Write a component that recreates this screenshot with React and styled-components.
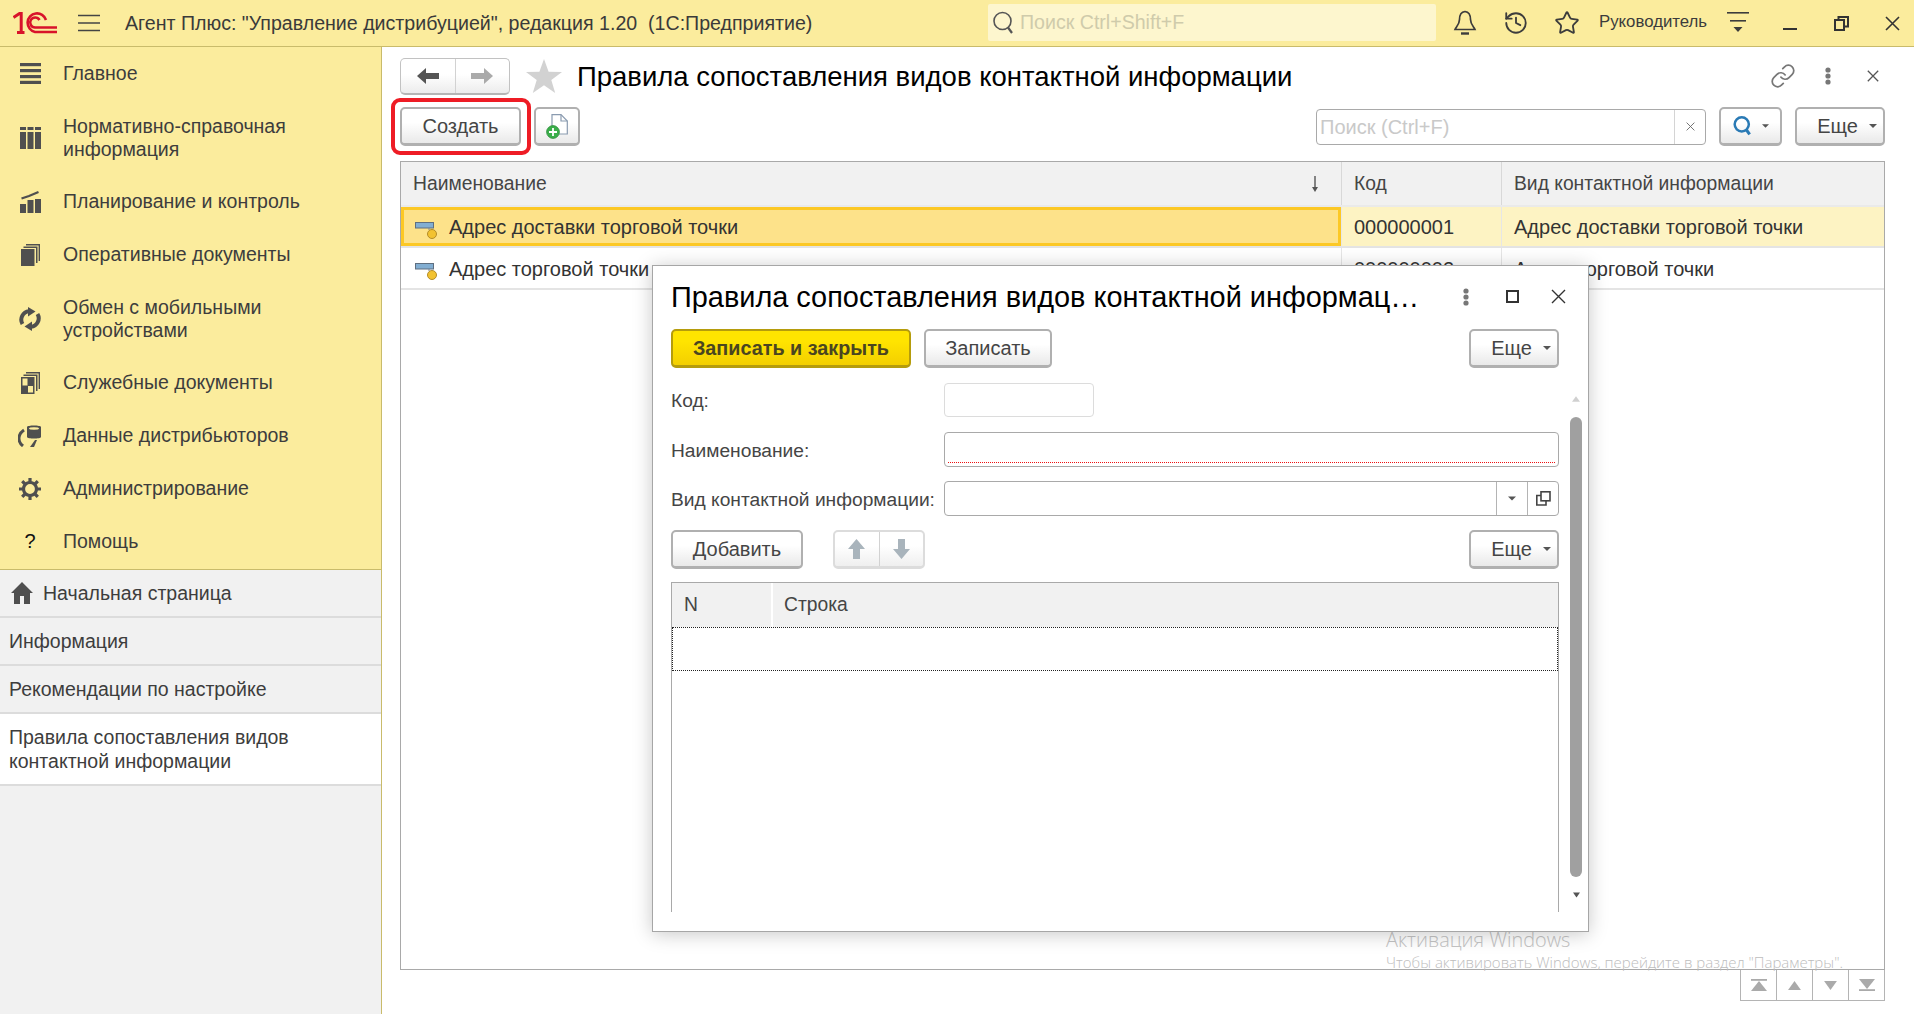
import React from "react";
import styled, { createGlobalStyle } from "styled-components";
import { History, Star, Link } from "lucide-react";

const Global = createGlobalStyle`
  html, body { margin: 0; padding: 0; width: 100%; height: 100%; overflow: hidden; background: #fff; }
  #root { height: 100%; }
  *, *::before, *::after { box-sizing: border-box; }
  body { font-family: "Liberation Sans", Arial, sans-serif; color: #3d3d3d; }
`;

const Page = styled.div`
  position: relative;
  width: 1914px;
  height: 1014px;
  display: flex;
  flex-direction: column;
  overflow: hidden;
`;

/* ---------- top bar ---------- */
const TopBar = styled.header`
  height: 47px;
  flex: none;
  display: flex;
  align-items: center;
  background: #fbec9d;
  border-bottom: 1px solid #c9bb6b;
  padding-left: 13px;
  & > * { flex: none; }
`;
const Burger = styled.span`
  display: flex;
  margin-left: 21px;
  margin-right: 25px;
`;
const AppTitle = styled.div`
  font-size: 19.6px;
  color: #3a3a3a;
  white-space: pre;
  width: 863px;
`;
const GlobalSearch = styled.div`
  width: 448px;
  height: 37px;
  margin-top: -1px;
  background: #fdf6ce;
  border-radius: 2px;
  display: flex;
  align-items: center;
  gap: 4px;
  padding-left: 4px;
  font-size: 19.6px;
  color: #cfcbab;
`;
const TopIcons = styled.div`
  display: flex;
  align-items: center;
`;
const TopIcon = styled.span`
  display: flex;
  justify-content: center;
  width: ${(p) => p.$w}px;
  padding-left: ${(p) => p.$pl || 0}px;
  color: #3c3c3c;
`;
const UserName = styled.span`
  font-size: 16.8px;
  color: #3c3c3c;
  width: 107px;
  margin: -3px 11px 0 3px;
  white-space: nowrap;
`;

/* ---------- layout ---------- */
const Body = styled.div`
  flex: 1;
  display: flex;
  min-height: 0;
`;
const Sidebar = styled.aside`
  width: 382px;
  flex: none;
  display: flex;
  flex-direction: column;
  background: #f1f1f1;
  border-right: 1px solid #c9bb6b;
`;
const MainMenu = styled.nav`
  background: #fbec9d;
  border-bottom: 1px solid #c9bb6b;
  height: 523px;
  flex: none;
`;
const MenuItem = styled.div`
  display: flex;
  align-items: center;
  padding: 14.5px 0 14.5px 17px;
  min-height: 53px;
  font-size: 19.5px;
  line-height: 23px;
  color: #3d3d3d;
`;
const MenuIcon = styled.span`
  width: 26px;
  flex: none;
  display: flex;
  justify-content: center;
  margin-right: 20px;
  font-size: 20px;
  color: #111;
`;
const SectionItem = styled.div`
  display: flex;
  align-items: center;
  gap: 10px;
  height: ${(p) => (p.$tall ? 72 : 48)}px;
  padding: ${(p) => (p.$tall ? "0 30px 0 9px" : "0 0 0 9px")};
  background: ${(p) => (p.$active ? "#fff" : "transparent")};
  border-bottom: 2px solid #dcdcdc;
  font-size: 19.5px;
  line-height: 24px;
  color: #3d3d3d;
`;
const HomeSlot = styled.span`
  display: flex;
  margin-left: 2px;
`;

const Main = styled.main`
  flex: 1;
  min-width: 0;
  display: flex;
  flex-direction: column;
  background: #fff;
  padding: 11px 29px 13px 18px;
`;
const Header = styled.div`
  height: 36px;
  flex: none;
  display: flex;
  align-items: center;
`;
const NavGroup = styled.div`
  width: 110px;
  height: 37px;
  flex: none;
  display: flex;
  border: 1px solid #c2c2c2;
  border-bottom: 2px solid #b5b5b5;
  border-radius: 5px;
  background: linear-gradient(#fff 45%, #ececec);
`;
const NavCell = styled.span`
  flex: 1;
  display: flex;
  align-items: center;
  justify-content: center;
  & + & { border-left: 1px solid #d2d2d2; }
`;
const FavStar = styled.span`
  display: flex;
  margin: 0 15px 0 16px;
`;
const PageTitle = styled.h1`
  margin: 1px 0 0;
  font-size: 27.5px;
  font-weight: 400;
  color: #000;
  flex: 1;
  white-space: nowrap;
`;
const HeaderIcons = styled.div`
  display: flex;
  align-items: center;
  color: #777;
  margin-right: 6px;
`;

const Toolbar = styled.div`
  height: 39px;
  flex: none;
  margin-top: 13px;
  display: flex;
  align-items: center;
`;
const Highlighted = styled.div`
  position: relative;
  display: flex;
  margin-right: 13px;
  &::after {
    content: "";
    position: absolute;
    left: -9px;
    top: -9px;
    width: 140px;
    height: 57px;
    border: 4px solid #ee1c25;
    border-radius: 9px;
    pointer-events: none;
  }
`;
const Btn = styled.button`
  width: ${(p) => p.$w}px;
  height: 39px;
  flex: none;
  padding: 0;
  display: flex;
  align-items: center;
  justify-content: center;
  gap: 9px;
  font: ${(p) => (p.$primary ? 700 : 400)} ${(p) => (p.$primary ? 19.8 : 20)}px "Liberation Sans", Arial, sans-serif;
  color: ${(p) => (p.$primary ? "#4a4520" : "#454545")};
  background: ${(p) =>
    p.$primary ? "linear-gradient(#ffe400 30%, #f3cf00)" : "linear-gradient(#fff 40%, #e9e9e9)"};
  border: 2px solid ${(p) => (p.$primary ? "#b59c0c" : "#b0b0b0")};
  border-bottom-width: 3px;
  border-radius: 5px;
`;
const MoreBtn = styled(Btn)`
  padding-left: 14px;
  gap: 11px;
`;
const Spacer = styled.div`
  flex: 1;
`;
const SearchField = styled.div`
  width: 390px;
  height: 36px;
  flex: none;
  display: flex;
  align-items: center;
  margin-right: 13px;
  border: 1px solid #a9a9a9;
  border-radius: 4px;
  font-size: 20px;
  color: #c9c9c9;
`;
const SearchText = styled.span`
  flex: 1;
  padding: 2px 0 0 3px;
`;
const ClearCell = styled.span`
  width: 31px;
  height: 100%;
  display: flex;
  align-items: center;
  justify-content: center;
  border-left: 1px solid #d4d4d4;
  color: #666;
`;
const Gap = styled.span`
  width: ${(p) => p.$w}px;
  height: ${(p) => p.$h || 0}px;
  flex: none;
`;

const DataTable = styled.section`
  flex: 1;
  min-height: 0;
  margin-top: 15px;
  border: 1px solid #a9a9a9;
  border-top-width: 1px;
`;
const MainRow = styled.div`
  display: grid;
  grid-template-columns: 940px 160px 1fr;
  height: ${(p) => p.$h}px;
  border-bottom: 2px solid ${(p) => p.$line || "#e4e4e4"};
  font-size: ${(p) => (p.$head ? 19.3 : 20)}px;
`;
const HeadCell = styled.div`
  display: flex;
  align-items: center;
  justify-content: space-between;
  padding: 0 21px 0 12px;
  background: #f1f1f1;
  color: #454545;
  & + & { border-left: 1px solid #d8d8d8; }
`;
const Cell = styled.div`
  display: flex;
  align-items: center;
  gap: 11px;
  padding-top: 2px;
  padding-left: ${(p) => (p.$first ? 14 : 12)}px;
  color: #333;
  background: ${(p) => (p.$sel ? "#fdf3c3" : "transparent")};
  & + & { border-left: 1px solid #e6e6e6; }
`;
const CurrentCell = styled(Cell)`
  background: #fde28a;
  border: 3px solid #fcc825;
  padding-left: 11px;
`;
const RowIconSlot = styled.span`
  display: flex;
  margin-top: 5px;
`;

const Footer = styled.div`
  height: 31px;
  flex: none;
  display: flex;
  justify-content: flex-end;
`;
const PagerCell = styled.span`
  width: 37px;
  height: 31px;
  margin-left: -1px;
  display: flex;
  align-items: center;
  justify-content: center;
  border: 1px solid #b4b4b4;
  border-top: none;
`;

/* ---------- floating window ---------- */
const Dialog = styled.div`
  position: absolute;
  left: 652px;
  top: 265px;
  width: 937px;
  height: 667px;
  display: flex;
  flex-direction: column;
  background: #fff;
  border: 1px solid #a6a6a6;
  box-shadow: 0 2px 18px rgba(0, 0, 0, 0.22);
  padding: 0 7px 19px 18px;
`;
const DialogHead = styled.div`
  height: 63px;
  flex: none;
  display: flex;
  align-items: center;
  padding-right: 4px;
`;
const DialogTitle = styled.div`
  font-size: 28.9px;
  color: #000;
  width: 792px;
  flex: none;
  white-space: nowrap;
`;
const DialogIcons = styled.div`
  display: flex;
  align-items: center;
  margin-top: -2px;
`;
const DialogToolbar = styled.div`
  height: 39px;
  flex: none;
  display: flex;
  align-items: center;
  gap: 13px;
  padding-right: 22px;
`;
const FormBody = styled.div`
  flex: 1;
  min-height: 0;
  display: flex;
  margin-top: 15px;
`;
const Fields = styled.div`
  width: 888px;
  flex: none;
  display: flex;
  flex-direction: column;
  gap: 14px;
`;
const FieldRow = styled.div`
  display: flex;
  align-items: center;
  margin-bottom: ${(p) => p.$mb || 0}px;
`;
const Label = styled.span`
  width: 273px;
  flex: none;
  margin-top: 2px;
  font-size: 19.2px;
  color: #454545;
  white-space: nowrap;
`;
const Input = styled.div`
  position: relative;
  width: ${(p) => p.$w}px;
  height: ${(p) => p.$h || 35}px;
  display: flex;
  justify-content: flex-end;
  border: 1px solid ${(p) => (p.$dim ? "#dcdcdc" : "#a9a9a9")};
  border-radius: 4px;
  background: #fff;
`;
const RequiredMark = styled.span`
  position: absolute;
  left: 3px;
  right: 3px;
  bottom: 3px;
  border-bottom: 1px dotted #ee1111;
`;
const FieldBtn = styled.span`
  width: 31px;
  display: flex;
  align-items: center;
  justify-content: center;
  border-left: 1px solid #b4b4b4;
`;
const TableToolbar = styled.div`
  height: 39px;
  flex: none;
  display: flex;
  align-items: center;
`;
const ArrowGroup = styled.div`
  width: 92px;
  height: 39px;
  margin-left: 30px;
  display: flex;
  border: 2px solid #dcdcdc;
  border-bottom-width: 3px;
  border-radius: 5px;
  background: linear-gradient(#fff 40%, #efefef);
`;
const InnerTable = styled.div`
  flex: 1;
  min-height: 0;
  margin-top: -1px;
  border: 1px solid #a9a9a9;
  border-bottom: none;
  font-size: 19.3px;
`;
const InnerHead = styled.div`
  display: grid;
  grid-template-columns: 99px 1fr;
  height: 44px;
  background: #f1f1f1;
`;
const InnerHeadCell = styled.div`
  display: flex;
  align-items: center;
  padding-left: 12px;
  color: #454545;
  & + & { border-left: 2px solid #fff; padding-left: 11px; }
`;
const InnerRow = styled.div`
  height: 44px;
  border: 1px dotted #222;
`;
const ScrollRail = styled.div`
  width: 12px;
  margin-left: 11px;
  padding-top: 13px;
  flex: none;
  display: flex;
  flex-direction: column;
  align-items: center;
`;
const ScrollThumb = styled.div`
  width: 12px;
  height: 460px;
  flex: none;
  margin: 15px 0 15px;
  border-radius: 6px;
  background: #a0a0a0;
`;

/* ---------- activation watermark ---------- */
const Watermark = styled.div`
  position: absolute;
  left: 1386px;
  top: 927px;
  color: #c4c4c4;
  font-family: "Open Sans", sans-serif;
  font-weight: 300;
  pointer-events: none;
`;
const WatermarkTitle = styled.div`
  font-size: 19.9px;
  line-height: 25px;
`;
const WatermarkText = styled.div`
  font-size: 15px;
  line-height: 20px;
  color: #bdbdbd;
  white-space: nowrap;
`;

/* ---------- icons ---------- */
const G = "#4f4f4f";

const Logo = () => (
  <svg width="44" height="22" viewBox="0 0 44 22" fill="none" stroke="#d8132a" strokeWidth="2.6">
    <path d="M0.5 5.5 L6.5 1.6 H8.2 V20.5 M4 20.5 H11.5" strokeWidth="3" />
    <path d="M44 20 H22 A9.4 9.4 0 1 1 33 8" />
    <path d="M44 15.5 H22 A5 5 0 1 1 26.5 8" />
  </svg>
);
const BurgerIcon = () => (
  <svg width="22" height="18" viewBox="0 0 22 18" stroke="#444" strokeWidth="1.6">
    <path d="M0 1.5 H22 M0 9 H22 M0 16.5 H22" />
  </svg>
);
const SearchIcon = ({ size = 24, color = "#555", w = 2 }) => (
  <svg width={size} height={size} viewBox="0 0 24 24" fill="none" stroke={color} strokeWidth={w}>
    <circle cx="10.5" cy="10" r="8.5" />
    <path d="M16 16.5 L20 22" strokeWidth={w + 0.6} />
  </svg>
);
const BellIcon = () => (
  <svg width="24" height="26" viewBox="0 0 24 26" fill="none" stroke="#3c3c3c" strokeWidth="1.7">
    <path d="M12 1.5 C8 2 6.5 5 6.5 9.5 C6.5 14.5 3 17 2 19.5 H22 C21 17 17.5 14.5 17.5 9.5 C17.5 5 16 2 12 1.5 Z" />
    <path d="M8 23.5 H16" strokeWidth="2.4" />
  </svg>
);
const FilterIcon = () => (
  <svg width="22" height="22" viewBox="0 0 22 22" fill="#3c3c3c" stroke="none">
    <rect x="0" y="0" width="22" height="1.6" />
    <rect x="3" y="8" width="16" height="1.6" />
    <path d="M6.5 15 H15.5 L11 20 Z" />
  </svg>
);
const MinIcon = () => (
  <svg width="14" height="14" viewBox="0 0 14 14"><rect x="0" y="12" width="14" height="2" fill="#333" /></svg>
);
const RestoreIcon = () => (
  <svg width="15" height="15" viewBox="0 0 15 15" fill="none" stroke="#333" strokeWidth="2">
    <rect x="1" y="4" width="9" height="10" />
    <path d="M4.5 4 V1 H14 V10.5 H10" />
  </svg>
);
const CloseIcon = ({ size = 15, color = "#333", w = 1.6 }) => (
  <svg width={size} height={size} viewBox="0 0 15 15" stroke={color} strokeWidth={w}>
    <path d="M1 1 L14 14 M14 1 L1 14" />
  </svg>
);
const DotsIcon = ({ color = "#777" }) => (
  <svg width="6" height="18" viewBox="0 0 6 18" fill={color}>
    <circle cx="3" cy="3" r="2.6" />
    <circle cx="3" cy="9" r="2.6" />
    <circle cx="3" cy="15" r="2.6" />
  </svg>
);
const Caret = ({ color = "#555", w = 8, h = 4 }) => (
  <svg width={w} height={h} viewBox="0 0 8 4" fill={color}><path d="M0 0 H8 L4 4 Z" /></svg>
);

const MListIcon = () => (
  <svg width="21" height="21" viewBox="0 0 21 21" fill={G}>
    <rect y="0" width="21" height="3.2" /><rect y="6" width="21" height="3.2" />
    <rect y="12" width="21" height="3.2" /><rect y="17.8" width="21" height="3.2" />
  </svg>
);
const MCatalogIcon = () => (
  <svg width="21" height="22" viewBox="0 0 21 22" fill={G}>
    <rect x="0" y="0" width="6" height="3" /><rect x="7.5" y="0" width="6" height="3" />
    <rect x="15" y="0" width="6" height="3" />
    <rect x="0" y="5" width="6" height="17" /><rect x="7.5" y="5" width="6" height="17" />
    <rect x="15" y="5" width="6" height="17" />
  </svg>
);
const MChartIcon = () => (
  <svg width="21" height="22" viewBox="0 0 21 22" fill={G}>
    <rect x="0" y="13" width="6" height="9" /><rect x="7.5" y="9" width="6" height="13" />
    <rect x="15" y="8" width="6" height="14" />
    <path d="M1.5 7.5 L9 5 L18.5 1" fill="none" stroke={G} strokeWidth="2.2" />
  </svg>
);
const MDocsIcon = ({ inner }) => (
  <svg width="19" height="22" viewBox="0 0 19 22" fill={G}>
    <path d="M5 0 H19 V17 H17.6 V1.4 H5 Z" />
    <path d="M2.5 2.5 H16.5 V19 H15 V4 H2.5 Z" />
    <rect x="0" y="5" width="13.5" height="17" />
    {inner && <rect x="1.5" y="6.5" width="5" height="7" fill="#fbec9d" />}
    {inner && <rect x="7" y="14" width="5" height="6.5" fill="#fbec9d" />}
  </svg>
);
const MSyncIcon = () => (
  <svg width="24" height="24" viewBox="0 0 24 24" fill="none" stroke={G} strokeWidth="4">
    <path d="M4.5 17 A8.5 8.5 0 0 1 11 4.2" />
    <path d="M19.5 7 A8.5 8.5 0 0 1 13 19.8" />
    <path d="M10 0 L17.5 4.5 L10 9.5 Z" fill={G} stroke="none" />
    <path d="M14 14.5 L6.5 19.5 L14 24 Z" fill={G} stroke="none" />
  </svg>
);
const MDataIcon = () => (
  <svg width="24" height="23" viewBox="0 0 24 23" fill={G}>
    <path d="M9 3 C9 1 23 1 23 3 V13 C23 15 9 15 9 13 Z" />
    <ellipse cx="16" cy="4.5" rx="5" ry="1.2" fill="#fbec9d" />
    <path d="M6 6 C0 10 -1 17 5 22" fill="none" stroke={G} strokeWidth="3" />
    <path d="M17 16 L12 23 H16 L19 16 Z" />
  </svg>
);
const MGearIcon = () => (
  <svg width="22" height="22" viewBox="0 0 22 22" fill="none" stroke={G}>
    <circle cx="11" cy="11" r="6.5" strokeWidth="3.2" />
    <path
      d="M11 0 V4 M11 18 V22 M0 11 H4 M18 11 H22 M3.2 3.2 L6 6 M16 16 L18.8 18.8 M18.8 3.2 L16 6 M6 16 L3.2 18.8"
      strokeWidth="3.2"
    />
  </svg>
);
const HomeIcon = () => (
  <svg width="22" height="22" viewBox="0 0 22 22" fill={G}>
    <path d="M11 0 L22 11 H19 V22 H13 V14 H9 V22 H3 V11 H0 Z" />
  </svg>
);
const ArrowLeft = ({ color }) => (
  <svg width="22" height="16" viewBox="0 0 22 16" fill={color}>
    <path d="M0 8 L9 0 V5 H22 V11 H9 V16 Z" />
  </svg>
);
const ArrowRight = ({ color }) => (
  <svg width="22" height="16" viewBox="0 0 22 16" fill={color}>
    <path d="M22 8 L13 0 V5 H0 V11 H13 V16 Z" />
  </svg>
);
const BigStar = () => (
  <svg width="36" height="34" viewBox="0 0 36 34" fill="#d2d2d2">
    <path d="M18 0 L22.6 12.8 L36 12.9 L25.3 21 L29.2 34 L18 26.3 L6.8 34 L10.7 21 L0 12.9 L13.4 12.8 Z" />
  </svg>
);
const NewDocIcon = () => (
  <svg width="22" height="25" viewBox="0 0 22 25">
    <path d="M6 .7 H15 L21.3 7 V20 H6 Z" fill="#fff" stroke="#8a9bb0" strokeWidth="1.2" />
    <path d="M15 .7 V7 H21.3" fill="none" stroke="#8a9bb0" strokeWidth="1.2" />
    <circle cx="7" cy="18" r="6.4" fill="#3aae4a" stroke="#2f8f3c" strokeWidth=".8" />
    <path d="M7 14 V22 M3 18 H11" stroke="#fff" strokeWidth="1.8" />
  </svg>
);
const RowIcon = () => (
  <svg width="23" height="17" viewBox="0 0 23 17">
    <rect x=".5" y=".5" width="18" height="5.5" fill="#82aed2" stroke="#5f6f80" />
    <path d="M14 6 V8" stroke="#7c8690" />
    <circle cx="17" cy="12" r="4.5" fill="#f2c230" stroke="#b48c28" />
  </svg>
);
const SortArrow = () => (
  <svg width="10" height="16" viewBox="0 0 10 16" fill="#555">
    <rect x="4.3" y="0" width="1.4" height="12" /><path d="M2 11 H8 L5 16 Z" />
  </svg>
);
const MoveUp = () => (
  <svg width="17" height="20" viewBox="0 0 17 20" fill="#a9b4bc">
    <path d="M8.5 0 L17 10 H12 V20 H5 V10 H0 Z" />
  </svg>
);
const MoveDown = () => (
  <svg width="17" height="20" viewBox="0 0 17 20" fill="#a9b4bc">
    <path d="M8.5 20 L17 10 H12 V0 H5 V10 H0 Z" />
  </svg>
);
const OpenIcon = () => (
  <svg width="15" height="15" viewBox="0 0 15 15" fill="none" stroke="#444" strokeWidth="1.6">
    <rect x="5" y=".8" width="9" height="9" />
    <path d="M5 4.5 H.8 V14 H10 V10" />
  </svg>
);
const Tri = ({ up, color, w = 10, h = 7 }) => (
  <svg width={w} height={h} viewBox="0 0 10 7" fill={color} style={{ flex: "none" }}>
    <path d={up ? "M5 0 L10 7 H0 Z" : "M0 0 H10 L5 7 Z"} />
  </svg>
);
const PagerFirst = () => (
  <svg width="16" height="12" viewBox="0 0 16 12" fill="#aaa"><rect width="16" height="1.8" /><path d="M8 2 L16 12 H0 Z" /></svg>
);
const PagerLast = () => (
  <svg width="16" height="12" viewBox="0 0 16 12" fill="#aaa"><rect y="10.2" width="16" height="1.8" /><path d="M0 0 H16 L8 10 Z" /></svg>
);

const menu = [
  { icon: <MListIcon />, text: "Главное" },
  { icon: <MCatalogIcon />, text: <>Нормативно-справочная<br />информация</> },
  { icon: <MChartIcon />, text: "Планирование и контроль" },
  { icon: <MDocsIcon />, text: "Оперативные документы" },
  { icon: <MSyncIcon />, text: <>Обмен с мобильными<br />устройствами</> },
  { icon: <MDocsIcon inner />, text: "Служебные документы" },
  { icon: <MDataIcon />, text: "Данные дистрибьюторов" },
  { icon: <MGearIcon />, text: "Администрирование" },
  { icon: "?", text: "Помощь" },
];

const FormTitle = "Правила сопоставления видов контактной информац…";

export default function App() {
  return (
    <Page>
      <Global />
      <TopBar>
        <Logo />
        <Burger><BurgerIcon /></Burger>
        <AppTitle>{'Агент Плюс: "Управление дистрибуцией", редакция 1.20  (1С:Предприятие)'}</AppTitle>
        <GlobalSearch>
          <SearchIcon size={24} color="#555" w={1.6} />
          Поиск Ctrl+Shift+F
        </GlobalSearch>
        <TopIcons>
          <TopIcon $w={58}><BellIcon /></TopIcon>
          <TopIcon $w={44}><History size={26} strokeWidth={1.7} /></TopIcon>
          <TopIcon $w={58}><Star size={26} strokeWidth={1.7} /></TopIcon>
          <UserName>Руководитель</UserName>
          <TopIcon $w={42}><FilterIcon /></TopIcon>
          <TopIcon $w={62}><MinIcon /></TopIcon>
          <TopIcon $w={40}><RestoreIcon /></TopIcon>
          <TopIcon $w={53} $pl={9}><CloseIcon size={15} /></TopIcon>
        </TopIcons>
      </TopBar>

      <Body>
        <Sidebar>
          <MainMenu>
            {menu.map((m, i) => (
              <MenuItem key={i}>
                <MenuIcon>{m.icon}</MenuIcon>
                <span>{m.text}</span>
              </MenuItem>
            ))}
          </MainMenu>
          <SectionItem><HomeSlot><HomeIcon /></HomeSlot>Начальная страница</SectionItem>
          <SectionItem>Информация</SectionItem>
          <SectionItem>Рекомендации по настройке</SectionItem>
          <SectionItem $active $tall>Правила сопоставления видов контактной информации</SectionItem>
        </Sidebar>

        <Main>
          <Header>
            <NavGroup>
              <NavCell><ArrowLeft color="#555" /></NavCell>
              <NavCell><ArrowRight color="#aaa" /></NavCell>
            </NavGroup>
            <FavStar><BigStar /></FavStar>
            <PageTitle>Правила сопоставления видов контактной информации</PageTitle>
            <HeaderIcons>
              <Link size={26} strokeWidth={1.6} />
              <Gap $w={29} />
              <DotsIcon />
              <Gap $w={36} />
              <CloseIcon size={12} color="#555" w={1.6} />
            </HeaderIcons>
          </Header>

          <Toolbar>
            <Highlighted><Btn $w={121}>Создать</Btn></Highlighted>
            <Btn $w={46}><NewDocIcon /></Btn>
            <Spacer />
            <SearchField>
              <SearchText>Поиск (Ctrl+F)</SearchText>
              <ClearCell><CloseIcon size={9} color="#666" w={1.5} /></ClearCell>
            </SearchField>
            <Btn $w={63}>
              <SearchIcon size={20} color="#2a7ab5" w={3} />
              <Caret w={7} h={4} />
            </Btn>
            <Gap $w={13} />
            <MoreBtn $w={90}>Еще<Caret w={8} h={4} /></MoreBtn>
          </Toolbar>

          <DataTable>
            <MainRow $h={45} $head $line="#eaeaea">
              <HeadCell>Наименование<SortArrow /></HeadCell>
              <HeadCell>Код</HeadCell>
              <HeadCell>Вид контактной информации</HeadCell>
            </MainRow>
            <MainRow $h={41}>
              <CurrentCell $first><RowIconSlot><RowIcon /></RowIconSlot>Адрес доставки торговой точки</CurrentCell>
              <Cell $sel>000000001</Cell>
              <Cell $sel>Адрес доставки торговой точки</Cell>
            </MainRow>
            <MainRow $h={42}>
              <Cell $first><RowIconSlot><RowIcon /></RowIconSlot>Адрес торговой точки</Cell>
              <Cell>000000002</Cell>
              <Cell>Адрес торговой точки</Cell>
            </MainRow>
          </DataTable>

          <Footer>
            <PagerCell><PagerFirst /></PagerCell>
            <PagerCell><Tri up color="#aaa" w={15} h={9} /></PagerCell>
            <PagerCell><Tri color="#aaa" w={15} h={9} /></PagerCell>
            <PagerCell><PagerLast /></PagerCell>
          </Footer>
        </Main>
      </Body>

      <Watermark>
        <WatermarkTitle>Активация Windows</WatermarkTitle>
        <WatermarkText>Чтобы активировать Windows, перейдите в раздел "Параметры".</WatermarkText>
      </Watermark>

      <Dialog>
        <DialogHead>
          <DialogTitle>{FormTitle}</DialogTitle>
          <DialogIcons>
            <DotsIcon />
            <Gap $w={37} />
            <svg width="13" height="13" viewBox="0 0 13 13" fill="none" stroke="#333" strokeWidth="2"><rect x="1" y="1" width="11" height="11" /></svg>
            <Gap $w={32} />
            <CloseIcon size={15} color="#333" w={1.4} />
          </DialogIcons>
        </DialogHead>
        <DialogToolbar>
          <Btn $primary $w={240}>Записать и закрыть</Btn>
          <Btn $w={128}>Записать</Btn>
          <Spacer />
          <MoreBtn $w={90}>Еще<Caret w={8} h={4} /></MoreBtn>
        </DialogToolbar>
        <FormBody>
          <Fields>
            <FieldRow $mb={1}>
              <Label>Код:</Label>
              <Input $w={150} $h={34} $dim />
            </FieldRow>
            <FieldRow>
              <Label>Наименование:</Label>
              <Input $w={615}><RequiredMark /></Input>
            </FieldRow>
            <FieldRow>
              <Label>Вид контактной информации:</Label>
              <Input $w={615}>
                <FieldBtn><Caret w={8} h={5} /></FieldBtn>
                <FieldBtn><OpenIcon /></FieldBtn>
              </Input>
            </FieldRow>
            <TableToolbar>
              <Btn $w={132}>Добавить</Btn>
              <ArrowGroup>
                <NavCell><MoveUp /></NavCell>
                <NavCell><MoveDown /></NavCell>
              </ArrowGroup>
              <Spacer />
              <MoreBtn $w={90}>Еще<Caret w={8} h={4} /></MoreBtn>
            </TableToolbar>
            <InnerTable>
              <InnerHead>
                <InnerHeadCell>N</InnerHeadCell>
                <InnerHeadCell>Строка</InnerHeadCell>
              </InnerHead>
              <InnerRow />
            </InnerTable>
          </Fields>
          <ScrollRail>
            <Tri up color="#d0d0d0" w={8} h={6} />
            <ScrollThumb />
            <Tri color="#555" w={7} h={6} />
          </ScrollRail>
        </FormBody>
      </Dialog>
    </Page>
  );
}
